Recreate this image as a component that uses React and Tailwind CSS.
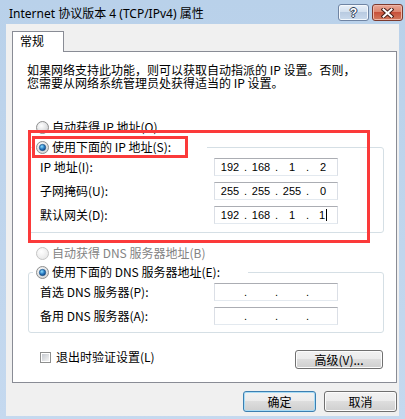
const cjk = "font-['Noto_Sans_CJK_SC',sans-serif]";

function Radio({ checked, disabled }) {
  const id = disabled ? "rbd" : "rb";
  return (
    <svg width="13" height="13" viewBox="0 0 13 13" className="shrink-0">
      <defs>
        <radialGradient id={id} cx="40%" cy="35%" r="70%">
          <stop offset="0%" stopColor="#ffffff" />
          <stop offset="100%" stopColor={disabled ? "#e6e6e6" : "#cfd1d3"} />
        </radialGradient>
        <radialGradient id="rdot" cx="40%" cy="35%" r="70%">
          <stop offset="0%" stopColor="#8fe0ff" />
          <stop offset="55%" stopColor="#2a7cc4" />
          <stop offset="100%" stopColor="#0b3f7a" />
        </radialGradient>
      </defs>
      <circle cx="6.5" cy="6.5" r="6" fill={`url(#${id})`} stroke={disabled ? "#c4c4c4" : "#8e8f8f"} />
      {checked && <circle cx="6.5" cy="6.5" r="3.2" fill="url(#rdot)" stroke="#1b4f80" strokeWidth="0.6" />}
    </svg>
  );
}

function Checkbox() {
  return (
    <svg width="11" height="11" viewBox="0 0 11 11" className="shrink-0">
      <defs>
        <linearGradient id="cb" x1="0" y1="0" x2="1" y2="1">
          <stop offset="0%" stopColor="#c5c9cf" />
          <stop offset="100%" stopColor="#f4f4f4" />
        </linearGradient>
      </defs>
      <rect x="0.5" y="0.5" width="10" height="10" fill="#fff" stroke="#8e8f8f" />
      <rect x="2" y="2" width="7" height="7" fill="url(#cb)" />
    </svg>
  );
}

function IpField({ parts, cursor }) {
  const segs = parts || ["", "", "", ""];
  return (
    <div className="w-[124px] h-[18px] bg-white border border-[#dbdfe6] border-t-[#abadb3] border-b-[#e3e9ef] flex items-center pl-px font-['Liberation_Sans',sans-serif] text-[11px] leading-[14px] text-black">
      {segs.map((s, i) => (
        <div key={i} className="flex items-center">
          {i > 0 && <span className="w-[3px] text-center">.</span>}
          <span className="w-[28px] text-center flex items-center justify-center">
            {s}
            {cursor && i === 3 && <span className="inline-block w-px h-[12px] bg-black ml-px" />}
          </span>
        </div>
      ))}
    </div>
  );
}

function Row({ label, parts, cursor }) {
  return (
    <div className="flex items-center h-[18px]">
      <div className="w-[185px] pl-[11px] text-[12px] leading-[16px]">{label}</div>
      <IpField parts={parts} cursor={cursor} />
    </div>
  );
}

function WinButton({ children, def, className }) {
  return (
    <button
      className={
        "rounded-[3px] border text-[12px] leading-[16px] text-black bg-[linear-gradient(#f2f2f2_0%,#ebebeb_50%,#dddddd_50%,#cfcfcf_100%)] " +
        (def
          ? "border-[#3c7fb1] shadow-[inset_0_0_0_1px_#a9dcf5]"
          : "border-[#707070] shadow-[inset_0_0_0_1px_#fcfcfc]") +
        " " +
        className
      }
    >
      {children}
    </button>
  );
}

export default function App() {
  return (
    <div className={`relative w-[405px] h-[419px] overflow-hidden bg-gradient-to-b from-[#b9d1ea] to-[#c5d9ef] ${cjk} text-black`}>
      {/* title bar */}
      <div className="h-[24px] flex items-start">
        <div className="pl-[9px] pt-[6px] text-[12px] leading-[16px] font-['Noto_Sans','Noto_Sans_CJK_SC',sans-serif] whitespace-nowrap">
          Internet 协议版本 4 (TCP/IPv4) 属性
        </div>
        <div className="ml-auto mt-[4px] mr-[2px] flex gap-[3px]">
          <div className="w-[31px] h-[17px] rounded-[3px] border border-[#6f84a3] bg-[linear-gradient(#e9f0f8_0%,#d3e0ef_45%,#b9cbe1_50%,#c9d9ec_100%)] shadow-[inset_0_0_0_1px_#f4f8fc] flex items-center justify-center">
            <span className="text-white font-bold text-[12px] leading-[12px] font-['Liberation_Sans',sans-serif] [text-shadow:1px_0_0_#2c3c55,-1px_0_0_#2c3c55,0_1px_0_#2c3c55,0_-1px_0_#2c3c55]">?</span>
          </div>
          <div className="w-[31px] h-[17px] rounded-[3px] border border-[#7d3a2e] bg-[linear-gradient(#eaa896_0%,#dc8670_45%,#c8503a_50%,#d27a5e_100%)] shadow-[inset_0_0_0_1px_#f0b7a8] flex items-center justify-center">
            <svg width="13" height="10" viewBox="0 0 13 10">
              <path d="M2.5 1.5 L10.5 8.5 M10.5 1.5 L2.5 8.5" stroke="#4a1f18" strokeWidth="4" strokeLinecap="square" />
              <path d="M2.5 1.5 L10.5 8.5 M10.5 1.5 L2.5 8.5" stroke="#ffffff" strokeWidth="2" strokeLinecap="square" />
            </svg>
          </div>
        </div>
      </div>

      {/* client area */}
      <div className="ml-[6px] w-[393px] h-[392px] bg-[#f0f0f0] pt-[7px] pl-[6px]">
        <div className="relative z-10 w-[52px] h-[21px] -mb-px bg-white border border-b-0 border-[#898c95] pl-[7px] text-[12px] leading-[16px] pt-px">
          常规
        </div>
        <div className="w-[385px] h-[332px] bg-white border border-[#898c95] flex flex-col">
          <div className="pt-[11px] pl-[14px] text-[12px] leading-[13px] whitespace-nowrap">
            <div>如果网络支持此功能，则可以获取自动指派的 IP 设置。否则，</div>
            <div>您需要从网络系统管理员处获得适当的 IP 设置。</div>
          </div>

          <div className="mt-[30px] pl-[23px] h-[16px] flex items-center gap-[3px] text-[12px] leading-[16px]">
            <Radio />
            <span>自动获得 IP 地址(O)</span>
          </div>

          <div className="mt-[12px] ml-[15px] w-[356px] h-[86px] border border-[#d5dfe5] rounded-[3px]">
            <div className="-mt-[9px] ml-[4px] w-[174px] h-[16px] bg-white pl-[3px] flex items-center gap-[3px] text-[12px] leading-[16px]">
              <Radio checked />
              <span>使用下面的 IP 地址(S):</span>
            </div>
            <div className="mt-[3px] flex flex-col gap-[6px]">
              <Row label="IP 地址(I):" parts={["192", "168", "1", "2"]} />
              <Row label="子网掩码(U):" parts={["255", "255", "255", "0"]} />
              <Row label="默认网关(D):" parts={["192", "168", "1", "1"]} cursor />
            </div>
          </div>

          <div className="mt-[12px] pl-[23px] h-[16px] flex items-center gap-[3px] text-[12px] leading-[16px] text-[#838383]">
            <Radio disabled />
            <span>自动获得 DNS 服务器地址(B)</span>
          </div>

          <div className="mt-[11px] ml-[15px] w-[356px] h-[61px] border border-[#d5dfe5] rounded-[3px]">
            <div className="-mt-[9px] ml-[4px] w-[215px] h-[16px] bg-white pl-[3px] flex items-center gap-[3px] text-[12px] leading-[16px]">
              <Radio checked />
              <span>使用下面的 DNS 服务器地址(E):</span>
            </div>
            <div className="mt-[3px] flex flex-col gap-[6px]">
              <Row label="首选 DNS 服务器(P):" />
              <Row label="备用 DNS 服务器(A):" />
            </div>
          </div>

          <div className="mt-[16px] pl-[27px] pr-[13px] flex items-start justify-between">
            <div className="h-[16px] flex items-center gap-[5px] text-[12px] leading-[16px]">
              <Checkbox />
              <span>退出时验证设置(L)</span>
            </div>
            <WinButton className="mt-px w-[88px] h-[19px]">高级(V)...</WinButton>
          </div>
        </div>

        <div className="mt-[8px] pr-[2px] flex justify-end gap-[8px]">
          <WinButton def className="w-[73px] h-[21px]">确定</WinButton>
          <WinButton className="w-[73px] h-[21px]">取消</WinButton>
        </div>
      </div>

      {/* annotation boxes */}
      <div className="absolute left-[28px] top-[130px] w-[342px] h-[113px] border-[3px] border-[#fb3a3a] pointer-events-none" />
      <div className="absolute left-[32px] top-[136px] w-[156px] h-[22px] border-[3px] border-[#fb3a3a] pointer-events-none" />
    </div>
  );
}
